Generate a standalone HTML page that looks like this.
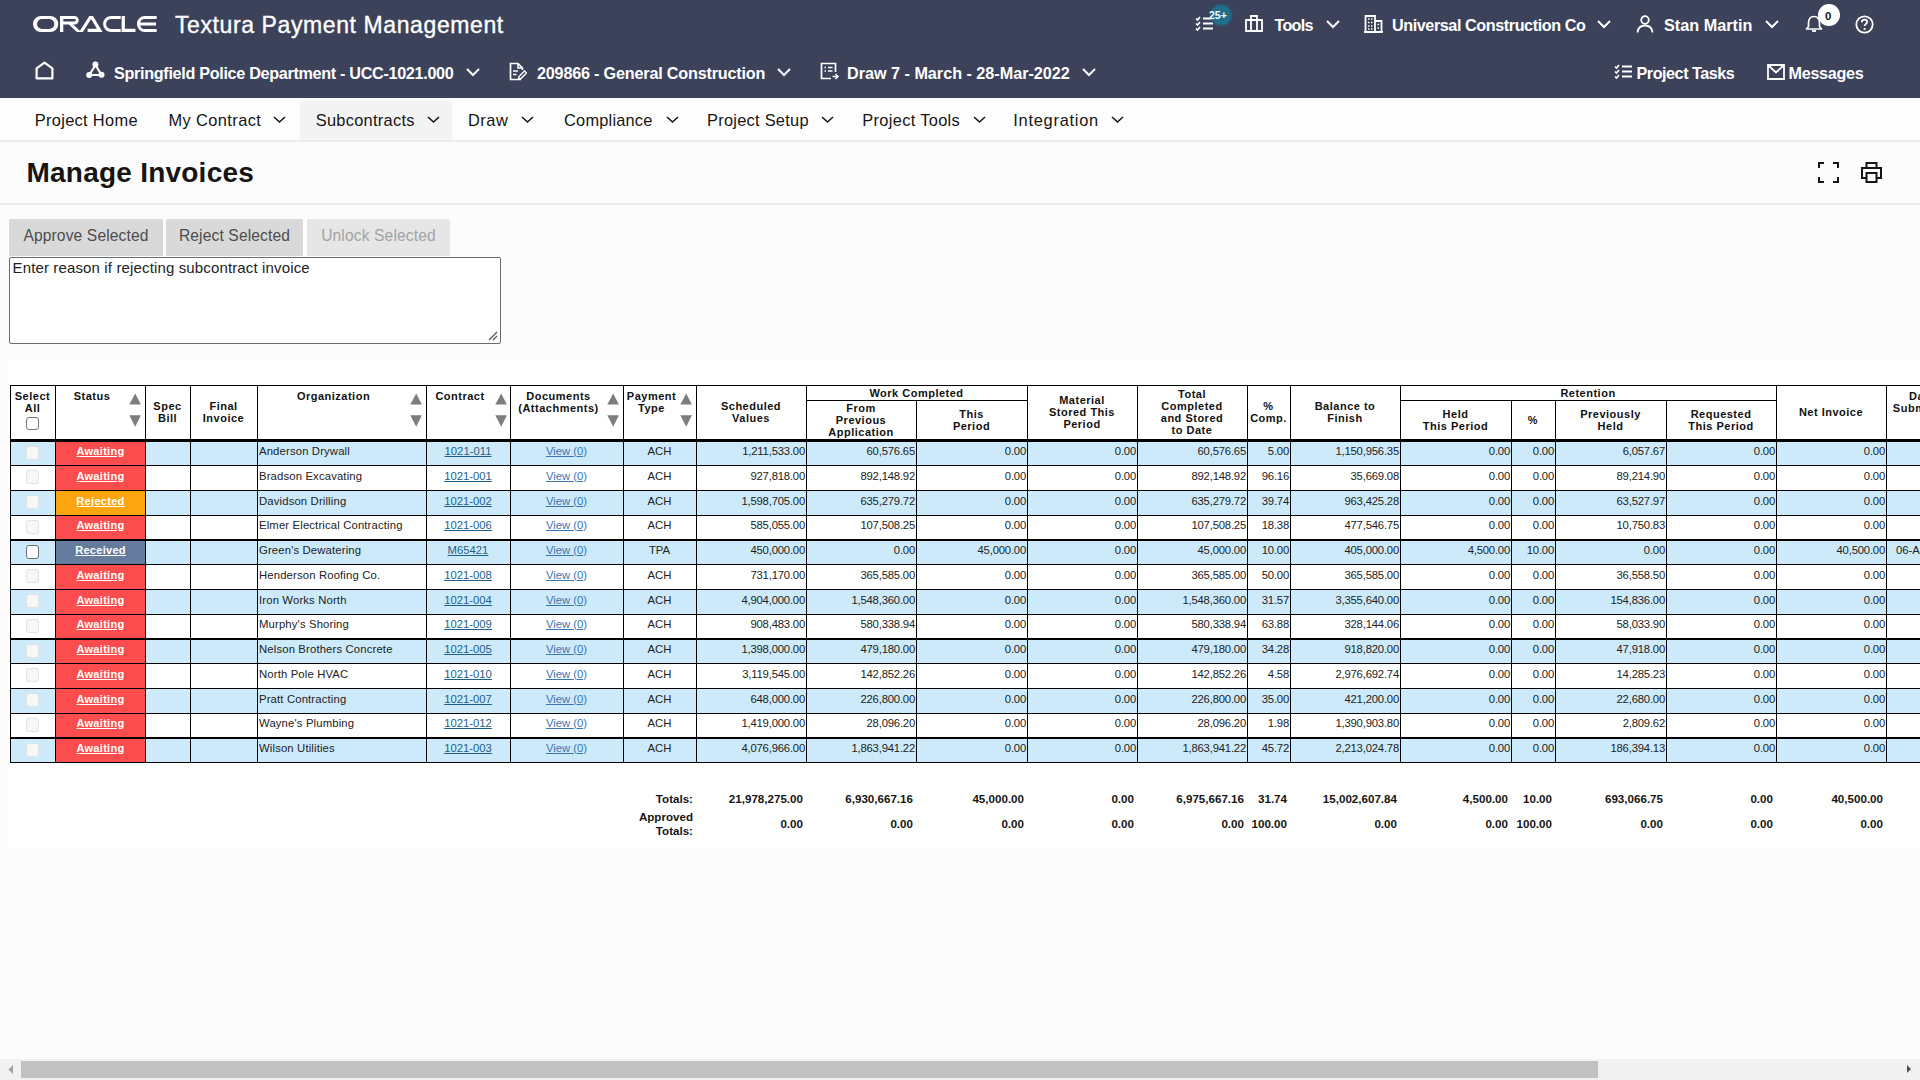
<!DOCTYPE html><html><head><meta charset="utf-8"><title>Manage Invoices</title><style>
*{box-sizing:border-box}
html,body{margin:0;padding:0}
body{width:1920px;height:1080px;overflow:hidden;position:relative;background:#fcfcfc;font-family:"Liberation Sans", sans-serif;}
.a{position:absolute;white-space:nowrap}
.hd{color:#fff;font-weight:bold;font-size:16px}
.mn{color:#161513;font-size:16.4px}
.th{font-weight:bold;font-size:11px;color:#111;text-align:center;line-height:12px;letter-spacing:0.5px}
.td{font-size:11.3px;color:#222;line-height:24px;white-space:nowrap;overflow:hidden}
.num{text-align:right;letter-spacing:-0.2px;padding-right:1px}
.lk{color:#1d5f8a;text-decoration:underline}
.st{color:#fff;font-weight:bold;text-decoration:underline;text-align:center;font-size:11px;letter-spacing:0.3px}
.tot{font-weight:bold;font-size:11.6px;color:#161513;text-align:right;letter-spacing:0px}
</style></head><body>
<div style="position:absolute;left:0px;top:0px;width:1920px;height:98px;background:#3d425b"></div>
<svg class="a" style="left:33px;top:16px" width="124" height="16" viewBox="0 0 124 16"><path fill="#fff" fill-rule="evenodd" d="M8,0 H17.3 A8,8 0 0 1 17.3,16 H8 A8,8 0 0 1 8,0 Z M9,3 H16.3 A5,5 0 0 1 16.3,13 H9 A5,5 0 0 1 9,3 Z"/><path fill="#fff" fill-rule="evenodd" d="M27,0 H41.5 A4.25,4.25 0 0 1 41.5,8.5 H40.2 L48.2,16 H43.9 L35.9,8.5 H30.3 V16 H27 Z M30.3,3 H41.5 A1.25,1.25 0 0 1 41.5,5.5 H30.3 Z"/><path fill="#fff" d="M46.1,16 L56.3,0 H60 L49.9,16 Z M56.3,0 H60 L69.6,16 H65.8 Z M54.6,12.8 H66.4 V16 H54.6 Z"/><path fill="#fff" d="M78.1,0 H87.7 V3 H78.1 A5,5 0 0 0 78.1,13 H87.7 V16 H78.1 A8,8 0 0 1 78.1,0 Z"/><path fill="#fff" d="M88.6,0 H91.9 V12.8 H102.5 V16 H88.6 Z"/><path fill="#fff" d="M111.9,0 H123.6 V3 H111.9 A5,5 0 0 0 107.1,6.4 H123 V9.4 H107.1 A5,5 0 0 0 111.9,13 H123.6 V16 H111.9 A8,8 0 0 1 111.9,0 Z"/></svg>
<div class="a" style="left:175px;top:11.23px;font-size:23px;line-height:29px;color:#fff;letter-spacing:0.6px;-webkit-text-stroke:0.35px #fff">Textura Payment Management</div>
<svg class="a" style="left:1195px;top:16px" width="19" height="16" viewBox="0 0 19 16"><path d="M1 2.5 L2.5 4 L5 1 M1 7.5 L2.5 9 L5 6 M1 12.5 L2.5 14 L5 11" fill="none" stroke="#fff" stroke-width="1.6"/><path d="M8 2.5 H18 M8 7.5 H18 M8 12.5 H18" stroke="#fff" stroke-width="1.8"/></svg>
<div class="a" style="left:1211px;top:4.5px;width:20px;height:20px;border-radius:50%;background:#1f6f8c;box-shadow:0 0 2px 1px rgba(31,111,140,0.6)"></div>
<div class="a" style="left:1209px;top:8.56px;font-size:10.5px;line-height:13px;color:#e8fbff;font-weight:bold;letter-spacing:0px">25+</div>
<svg class="a" style="left:1245px;top:15px" width="18" height="17" viewBox="0 0 18 17"><path d="M1 5 H17 V16 H1 Z M6 5 V1 H12 V5 M6 5 V16 M12 5 V16" fill="none" stroke="#fff" stroke-width="1.8"/></svg>
<div class="a" style="left:1274.5px;top:15.09px;font-size:16.2px;line-height:20px;color:#fff;font-weight:bold;letter-spacing:-0.75px">Tools</div>
<svg class="a" style="left:1326px;top:19.5px" width="14" height="9"><path d="M1 1 L7.0 7 L13 1" fill="none" stroke="#fff" stroke-width="2"/></svg>
<svg class="a" style="left:1364px;top:15px" width="19" height="18" viewBox="0 0 19 18"><path d="M1.5 17 V1 H11 V17 M11 6 H17.5 V17 M0 17 H19" fill="none" stroke="#fff" stroke-width="1.8"/><path d="M4 4 H5.5 M7 4 H8.5 M4 7.5 H5.5 M7 7.5 H8.5 M4 11 H5.5 M7 11 H8.5 M4 14 H5.5 M7 14 H8.5 M13.5 9.5 H15 M13.5 13 H15" stroke="#fff" stroke-width="1.6"/></svg>
<div class="a" style="left:1392px;top:15.09px;font-size:16.2px;line-height:20px;color:#fff;font-weight:bold;letter-spacing:-0.43px">Universal Construction Co</div>
<svg class="a" style="left:1597px;top:19.5px" width="14" height="9"><path d="M1 1 L7.0 7 L13 1" fill="none" stroke="#fff" stroke-width="2"/></svg>
<svg class="a" style="left:1636px;top:15px" width="18" height="18" viewBox="0 0 18 18"><circle cx="9" cy="5" r="3.8" fill="none" stroke="#fff" stroke-width="1.8"/><path d="M1.5 17.5 C2 12.5 5 10.5 9 10.5 C13 10.5 16 12.5 16.5 17.5" fill="none" stroke="#fff" stroke-width="1.8"/></svg>
<div class="a" style="left:1664px;top:15.09px;font-size:16.2px;line-height:20px;color:#fff;font-weight:bold;letter-spacing:0.03px">Stan Martin</div>
<svg class="a" style="left:1765px;top:19.5px" width="14" height="9"><path d="M1 1 L7.0 7 L13 1" fill="none" stroke="#fff" stroke-width="2"/></svg>
<svg class="a" style="left:1805px;top:15px" width="18" height="18" viewBox="0 0 18 18"><path d="M9 1.5 C5 1.5 3.5 4.5 3.5 8 V11.5 L1.5 14 H16.5 L14.5 11.5 V8 C14.5 4.5 13 1.5 9 1.5 Z" fill="none" stroke="#fff" stroke-width="1.7" stroke-linejoin="round"/><path d="M7 16 H11" stroke="#fff" stroke-width="1.8"/></svg>
<div class="a" style="left:1818px;top:4px;width:22px;height:22px;border-radius:50%;background:#fff"></div>
<div class="a" style="left:1825px;top:8.52px;font-size:11.5px;line-height:14px;color:#161513;font-weight:bold">0</div>
<svg class="a" style="left:1855px;top:15px" width="19" height="19" viewBox="0 0 19 19"><circle cx="9.5" cy="9.5" r="8.2" fill="none" stroke="#fff" stroke-width="1.8"/><path d="M6.8 7.2 C6.8 5.5 8 4.6 9.5 4.6 C11 4.6 12.2 5.6 12.2 7 C12.2 8.8 9.6 9 9.6 11" fill="none" stroke="#fff" stroke-width="1.8"/><circle cx="9.6" cy="14" r="1.1" fill="#fff"/></svg>
<svg class="a" style="left:35px;top:61px" width="19" height="19" viewBox="0 0 19 19"><path d="M1.6 17.4 V7.3 L9.5 1.6 L17.4 7.3 V17.4 Z" fill="none" stroke="#fff" stroke-width="2.2" stroke-linejoin="round"/></svg>
<svg class="a" style="left:86px;top:61px" width="19" height="19" viewBox="0 0 19 19"><path d="M9.5 4 L3.3 14 H15.5 Z" fill="none" stroke="#fff" stroke-width="2"/><circle cx="9.4" cy="3.5" r="3" fill="#fff"/><circle cx="3.2" cy="14" r="3" fill="#fff"/><circle cx="15.5" cy="13.8" r="3" fill="#fff"/></svg>
<div class="a" style="left:114px;top:63.09px;font-size:16.2px;line-height:20px;color:#fff;font-weight:bold;letter-spacing:-0.32px">Springfield Police Department - UCC-1021.000</div>
<svg class="a" style="left:466px;top:67.5px" width="14" height="9"><path d="M1 1 L7.0 7 L13 1" fill="none" stroke="#fff" stroke-width="2"/></svg>
<svg class="a" style="left:509px;top:62px" width="18" height="19" viewBox="0 0 18 19"><path d="M12 17.5 H1.5 V1.5 H9 L13.5 6 V8" fill="none" stroke="#fff" stroke-width="1.7"/><path d="M9 1.5 V6 H13.5" fill="none" stroke="#fff" stroke-width="1.5"/><path d="M4 9 H9 M4 12.5 H7.5" stroke="#fff" stroke-width="1.5"/><path d="M9.5 17 L10 14.5 L15.5 9 L17.5 11 L12 16.5 Z" fill="none" stroke="#fff" stroke-width="1.4"/></svg>
<div class="a" style="left:537px;top:63.09px;font-size:16.2px;line-height:20px;color:#fff;font-weight:bold;letter-spacing:-0.2px">209866 - General Construction</div>
<svg class="a" style="left:777px;top:67.5px" width="14" height="9"><path d="M1 1 L7.0 7 L13 1" fill="none" stroke="#fff" stroke-width="2"/></svg>
<svg class="a" style="left:820px;top:62px" width="19" height="18" viewBox="0 0 19 18"><path d="M11 16.5 H1.5 V1.5 H15.5 V10" fill="none" stroke="#fff" stroke-width="1.7"/><path d="M4.5 5.5 H6 M8 5.5 H12.5 M4.5 9 H6 M8 9 H12.5" stroke="#fff" stroke-width="1.5"/><path d="M12.5 14.5 H18 M15.5 12 L18 14.5 L15.5 17" fill="none" stroke="#fff" stroke-width="1.5"/></svg>
<div class="a" style="left:847px;top:63.09px;font-size:16.2px;line-height:20px;color:#fff;font-weight:bold;letter-spacing:-0.01px">Draw 7 - March - 28-Mar-2022</div>
<svg class="a" style="left:1082px;top:67.5px" width="14" height="9"><path d="M1 1 L7.0 7 L13 1" fill="none" stroke="#fff" stroke-width="2"/></svg>
<svg class="a" style="left:1614px;top:64px" width="19" height="16" viewBox="0 0 19 16"><path d="M1 2.5 L2.5 4 L5 1 M1 7.5 L2.5 9 L5 6 M1 12.5 L2.5 14 L5 11" fill="none" stroke="#fff" stroke-width="1.6"/><path d="M8 2.5 H18 M8 7.5 H18 M8 12.5 H18" stroke="#fff" stroke-width="1.8"/></svg>
<div class="a" style="left:1636.5px;top:62.79px;font-size:16.2px;line-height:20px;color:#fff;font-weight:bold;letter-spacing:-0.475px">Project Tasks</div>
<svg class="a" style="left:1767px;top:64px" width="18" height="16" viewBox="0 0 18 16"><path d="M1 1 H17 V15 H1 Z M1.5 1.5 L9 8.5 L16.5 1.5" fill="none" stroke="#fff" stroke-width="1.8"/></svg>
<div class="a" style="left:1788.5px;top:62.79px;font-size:16.2px;line-height:20px;color:#fff;font-weight:bold;letter-spacing:-0.3px">Messages</div>
<div style="position:absolute;left:0px;top:98px;width:1920px;height:42px;background:#fdfdfe"></div>
<div style="position:absolute;left:300px;top:101px;width:152px;height:39px;background:#f3f3f4"></div>
<div style="position:absolute;left:0px;top:140px;width:1920px;height:2px;background:#ededed"></div>
<div class="a" style="left:34.8px;top:110.12px;font-size:16.4px;line-height:20px;color:#161513;letter-spacing:0.31px">Project Home</div>
<div class="a" style="left:168.4px;top:110.12px;font-size:16.4px;line-height:20px;color:#161513;letter-spacing:0.41px">My Contract</div>
<svg class="a" style="left:273px;top:116px" width="13" height="8"><path d="M1 1 L6.5 6 L12 1" fill="none" stroke="#161513" stroke-width="1.6"/></svg>
<div class="a" style="left:315.7px;top:110.12px;font-size:16.4px;line-height:20px;color:#161513;letter-spacing:0.28px">Subcontracts</div>
<svg class="a" style="left:426.5px;top:116px" width="13" height="8"><path d="M1 1 L6.5 6 L12 1" fill="none" stroke="#161513" stroke-width="1.6"/></svg>
<div class="a" style="left:468px;top:110.12px;font-size:16.4px;line-height:20px;color:#161513;letter-spacing:0.5px">Draw</div>
<svg class="a" style="left:520.5px;top:116px" width="13" height="8"><path d="M1 1 L6.5 6 L12 1" fill="none" stroke="#161513" stroke-width="1.6"/></svg>
<div class="a" style="left:564.1px;top:110.12px;font-size:16.4px;line-height:20px;color:#161513;letter-spacing:0.19px">Compliance</div>
<svg class="a" style="left:665.5px;top:116px" width="13" height="8"><path d="M1 1 L6.5 6 L12 1" fill="none" stroke="#161513" stroke-width="1.6"/></svg>
<div class="a" style="left:707.1px;top:110.12px;font-size:16.4px;line-height:20px;color:#161513;letter-spacing:0.25px">Project Setup</div>
<svg class="a" style="left:821.2px;top:116px" width="13" height="8"><path d="M1 1 L6.5 6 L12 1" fill="none" stroke="#161513" stroke-width="1.6"/></svg>
<div class="a" style="left:862.2px;top:110.12px;font-size:16.4px;line-height:20px;color:#161513;letter-spacing:0.34px">Project Tools</div>
<svg class="a" style="left:972.8px;top:116px" width="13" height="8"><path d="M1 1 L6.5 6 L12 1" fill="none" stroke="#161513" stroke-width="1.6"/></svg>
<div class="a" style="left:1013.3px;top:110.12px;font-size:16.4px;line-height:20px;color:#161513;letter-spacing:0.74px">Integration</div>
<svg class="a" style="left:1111.2px;top:116px" width="13" height="8"><path d="M1 1 L6.5 6 L12 1" fill="none" stroke="#161513" stroke-width="1.6"/></svg>
<div style="position:absolute;left:0px;top:142px;width:1920px;height:61px;background:#fcfcfc"></div>
<div style="position:absolute;left:0px;top:203px;width:1920px;height:2px;background:#ededed"></div>
<div class="a" style="left:26.5px;top:154px;font-size:28px;font-weight:bold;color:#161513;line-height:38px;letter-spacing:0.23px">Manage Invoices</div>
<svg class="a" style="left:1818px;top:162px" width="21" height="21" viewBox="0 0 21 21"><path d="M1 6 V1 H6 M15 1 H20 V6 M20 15 V20 H15 M6 20 H1 V15" fill="none" stroke="#161513" stroke-width="2"/></svg>
<svg class="a" style="left:1861px;top:162px" width="21" height="21" viewBox="0 0 21 21"><path d="M5.5 6 V1 H15.5 V6 M5.5 16 H1 V6 H20 V16 H15.5 M5.5 11 H15.5 V20 H5.5 Z" fill="none" stroke="#161513" stroke-width="2"/></svg>
<div class="a" style="left:9px;top:219px;width:154px;height:37px;background:#d9d9d9;border-radius:2px 2px 0 0;color:#4d4d4d;font-size:15.6px;line-height:34px;text-align:center;letter-spacing:0.13px">Approve Selected</div>
<div class="a" style="left:166px;top:219px;width:137px;height:37px;background:#d9d9d9;border-radius:2px 2px 0 0;color:#4d4d4d;font-size:15.6px;line-height:34px;text-align:center;letter-spacing:0.13px">Reject Selected</div>
<div class="a" style="left:307px;top:219px;width:143px;height:37px;background:#e6e6e6;border-radius:2px 2px 0 0;color:#a3a3a3;font-size:15.6px;line-height:34px;text-align:center;letter-spacing:0.13px">Unlock Selected</div>
<div style="position:absolute;left:9px;top:257px;width:492px;height:87px;background:#fff;border:1px solid #6b6b6b;border-radius:2px"></div>
<div class="a" style="left:12.5px;top:259px;font-size:15px;color:#222;line-height:18px;letter-spacing:0.14px">Enter reason if rejecting subcontract invoice</div>
<svg class="a" style="left:486px;top:329px" width="12" height="12"><path d="M3 11 L11 3 M7 11 L11 7" stroke="#555" stroke-width="1.2"/></svg>
<div style="position:absolute;left:8px;top:360px;width:1912px;height:488px;background:#fff"></div>
<div style="position:absolute;left:10px;top:385px;width:1910px;height:54px;background:#fff"></div>
<div style="position:absolute;left:10px;top:442px;width:1910px;height:23px;background:#cdeafb"></div>
<div style="position:absolute;left:10px;top:466px;width:1910px;height:24px;background:#fff"></div>
<div style="position:absolute;left:10px;top:491px;width:1910px;height:24px;background:#cdeafb"></div>
<div style="position:absolute;left:10px;top:516px;width:1910px;height:23px;background:#fff"></div>
<div style="position:absolute;left:10px;top:541px;width:1910px;height:23px;background:#cdeafb"></div>
<div style="position:absolute;left:10px;top:565px;width:1910px;height:24px;background:#fff"></div>
<div style="position:absolute;left:10px;top:590px;width:1910px;height:24px;background:#cdeafb"></div>
<div style="position:absolute;left:10px;top:615px;width:1910px;height:23px;background:#fff"></div>
<div style="position:absolute;left:10px;top:640px;width:1910px;height:23px;background:#cdeafb"></div>
<div style="position:absolute;left:10px;top:664px;width:1910px;height:24px;background:#fff"></div>
<div style="position:absolute;left:10px;top:689px;width:1910px;height:24px;background:#cdeafb"></div>
<div style="position:absolute;left:10px;top:714px;width:1910px;height:23px;background:#fff"></div>
<div style="position:absolute;left:10px;top:739px;width:1910px;height:23px;background:#cdeafb"></div>
<div style="position:absolute;left:56px;top:442px;width:89px;height:23px;background:#fb4d4d"></div>
<div style="position:absolute;left:56px;top:466px;width:89px;height:24px;background:#fb4d4d"></div>
<div style="position:absolute;left:56px;top:491px;width:89px;height:24px;background:#fda50f"></div>
<div style="position:absolute;left:56px;top:516px;width:89px;height:23px;background:#fb4d4d"></div>
<div style="position:absolute;left:56px;top:541px;width:89px;height:23px;background:#657c9e"></div>
<div style="position:absolute;left:56px;top:565px;width:89px;height:24px;background:#fb4d4d"></div>
<div style="position:absolute;left:56px;top:590px;width:89px;height:24px;background:#fb4d4d"></div>
<div style="position:absolute;left:56px;top:615px;width:89px;height:23px;background:#fb4d4d"></div>
<div style="position:absolute;left:56px;top:640px;width:89px;height:23px;background:#fb4d4d"></div>
<div style="position:absolute;left:56px;top:664px;width:89px;height:24px;background:#fb4d4d"></div>
<div style="position:absolute;left:56px;top:689px;width:89px;height:24px;background:#fb4d4d"></div>
<div style="position:absolute;left:56px;top:714px;width:89px;height:23px;background:#fb4d4d"></div>
<div style="position:absolute;left:56px;top:739px;width:89px;height:23px;background:#fb4d4d"></div>
<div style="position:absolute;left:10px;top:385px;width:1910px;height:1px;background:#000"></div>
<div style="position:absolute;left:806px;top:400px;width:221px;height:1px;background:#000"></div>
<div style="position:absolute;left:1400px;top:400px;width:376px;height:1px;background:#000"></div>
<div style="position:absolute;left:10px;top:439px;width:1910px;height:3px;background:#000"></div>
<div style="position:absolute;left:10px;top:465px;width:1910px;height:1px;background:#000"></div>
<div style="position:absolute;left:10px;top:490px;width:1910px;height:1px;background:#000"></div>
<div style="position:absolute;left:10px;top:515px;width:1910px;height:1px;background:#000"></div>
<div style="position:absolute;left:10px;top:539px;width:1910px;height:2px;background:#000"></div>
<div style="position:absolute;left:10px;top:564px;width:1910px;height:1px;background:#000"></div>
<div style="position:absolute;left:10px;top:589px;width:1910px;height:1px;background:#000"></div>
<div style="position:absolute;left:10px;top:614px;width:1910px;height:1px;background:#000"></div>
<div style="position:absolute;left:10px;top:638px;width:1910px;height:2px;background:#000"></div>
<div style="position:absolute;left:10px;top:663px;width:1910px;height:1px;background:#000"></div>
<div style="position:absolute;left:10px;top:688px;width:1910px;height:1px;background:#000"></div>
<div style="position:absolute;left:10px;top:713px;width:1910px;height:1px;background:#000"></div>
<div style="position:absolute;left:10px;top:737px;width:1910px;height:2px;background:#000"></div>
<div style="position:absolute;left:10px;top:762px;width:1910px;height:1px;background:#000"></div>
<div style="position:absolute;left:10px;top:385px;width:1px;height:377px;background:#000"></div>
<div style="position:absolute;left:55px;top:385px;width:1px;height:377px;background:#000"></div>
<div style="position:absolute;left:145px;top:385px;width:1px;height:377px;background:#000"></div>
<div style="position:absolute;left:190px;top:385px;width:1px;height:377px;background:#000"></div>
<div style="position:absolute;left:257px;top:385px;width:1px;height:377px;background:#000"></div>
<div style="position:absolute;left:426px;top:385px;width:1px;height:377px;background:#000"></div>
<div style="position:absolute;left:510px;top:385px;width:1px;height:377px;background:#000"></div>
<div style="position:absolute;left:623px;top:385px;width:1px;height:377px;background:#000"></div>
<div style="position:absolute;left:696px;top:385px;width:1px;height:377px;background:#000"></div>
<div style="position:absolute;left:806px;top:385px;width:1px;height:377px;background:#000"></div>
<div style="position:absolute;left:916px;top:400px;width:1px;height:362px;background:#000"></div>
<div style="position:absolute;left:1027px;top:385px;width:1px;height:377px;background:#000"></div>
<div style="position:absolute;left:1137px;top:385px;width:1px;height:377px;background:#000"></div>
<div style="position:absolute;left:1247px;top:385px;width:1px;height:377px;background:#000"></div>
<div style="position:absolute;left:1290px;top:385px;width:1px;height:377px;background:#000"></div>
<div style="position:absolute;left:1400px;top:385px;width:1px;height:377px;background:#000"></div>
<div style="position:absolute;left:1511px;top:400px;width:1px;height:362px;background:#000"></div>
<div style="position:absolute;left:1555px;top:400px;width:1px;height:362px;background:#000"></div>
<div style="position:absolute;left:1666px;top:400px;width:1px;height:362px;background:#000"></div>
<div style="position:absolute;left:1776px;top:385px;width:1px;height:377px;background:#000"></div>
<div style="position:absolute;left:1886px;top:385px;width:1px;height:377px;background:#000"></div>
<div class="a th" style="left:10px;top:390px;width:45px;">Select<br>All</div>
<div class="a th" style="left:55px;top:390px;width:74px;">Status</div>
<div class="a th" style="left:145px;top:400px;width:45px;">Spec<br>Bill</div>
<div class="a th" style="left:190px;top:400px;width:67px;">Final<br>Invoice</div>
<div class="a th" style="left:257px;top:390px;width:153px;">Organization</div>
<div class="a th" style="left:426px;top:390px;width:68px;">Contract</div>
<div class="a th" style="left:510px;top:390px;width:97px;">Documents<br>(Attachments)</div>
<div class="a th" style="left:623px;top:390px;width:57px;">Payment<br>Type</div>
<div class="a th" style="left:696px;top:400px;width:110px;">Scheduled<br>Values</div>
<div class="a th" style="left:806px;top:387px;width:221px;">Work Completed</div>
<div class="a th" style="left:806px;top:402px;width:110px;">From<br>Previous<br>Application</div>
<div class="a th" style="left:916px;top:408px;width:111px;">This<br>Period</div>
<div class="a th" style="left:1027px;top:394px;width:110px;">Material<br>Stored This<br>Period</div>
<div class="a th" style="left:1137px;top:388px;width:110px;">Total<br>Completed<br>and Stored<br>to Date</div>
<div class="a th" style="left:1247px;top:400px;width:43px;">%<br>Comp.</div>
<div class="a th" style="left:1290px;top:400px;width:110px;">Balance to<br>Finish</div>
<div class="a th" style="left:1400px;top:387px;width:376px;">Retention</div>
<div class="a th" style="left:1400px;top:408px;width:111px;">Held<br>This Period</div>
<div class="a th" style="left:1511px;top:414px;width:44px;">%</div>
<div class="a th" style="left:1555px;top:408px;width:111px;">Previously<br>Held</div>
<div class="a th" style="left:1666px;top:408px;width:110px;">Requested<br>This Period</div>
<div class="a th" style="left:1776px;top:406px;width:110px;">Net Invoice</div>
<div class="a th" style="left:1886px;top:390px;width:72px;">Date<br>Submitted</div>
<svg class="a" style="left:129px;top:392px" width="12" height="36"><path d="M6.2 1.4 L11.9 12.5 L0.3 12.5 Z" fill="#7d7d7d"/><path d="M0.3 23.2 L11.9 23.2 L6.2 34.7 Z" fill="#7d7d7d"/></svg>
<svg class="a" style="left:410px;top:392px" width="12" height="36"><path d="M6.2 1.4 L11.9 12.5 L0.3 12.5 Z" fill="#7d7d7d"/><path d="M0.3 23.2 L11.9 23.2 L6.2 34.7 Z" fill="#7d7d7d"/></svg>
<svg class="a" style="left:495px;top:392px" width="12" height="36"><path d="M6.2 1.4 L11.9 12.5 L0.3 12.5 Z" fill="#7d7d7d"/><path d="M0.3 23.2 L11.9 23.2 L6.2 34.7 Z" fill="#7d7d7d"/></svg>
<svg class="a" style="left:607px;top:392px" width="12" height="36"><path d="M6.2 1.4 L11.9 12.5 L0.3 12.5 Z" fill="#7d7d7d"/><path d="M0.3 23.2 L11.9 23.2 L6.2 34.7 Z" fill="#7d7d7d"/></svg>
<svg class="a" style="left:680px;top:392px" width="12" height="36"><path d="M6.2 1.4 L11.9 12.5 L0.3 12.5 Z" fill="#7d7d7d"/><path d="M0.3 23.2 L11.9 23.2 L6.2 34.7 Z" fill="#7d7d7d"/></svg>
<div class="a" style="left:26px;top:417px;width:13px;height:13px;border:1px solid #777;border-radius:3px;background:#fff"></div>
<div class="a" style="left:26px;top:446px;width:13px;height:14px;border:1px solid #e2e2e2;border-radius:3px;background:#f7f7f7"></div>
<div class="a td st" style="left:56px;top:439.5px;width:89px;height:23px;line-height:23px">Awaiting</div>
<div class="a td" style="left:259px;top:439.5px;width:167px;height:23px;line-height:23px;letter-spacing:0.15px">Anderson Drywall</div>
<div class="a td lk" style="left:426px;top:439.5px;width:84px;height:23px;line-height:23px;text-align:center">1021-011</div>
<div class="a td lk" style="left:510px;top:439.5px;width:113px;height:23px;line-height:23px;text-align:center;color:#3a76b0">View (0)</div>
<div class="a td" style="left:623px;top:439.5px;width:73px;height:23px;line-height:23px;text-align:center">ACH</div>
<div class="a td num" style="left:696px;top:439.5px;width:110px;height:23px;line-height:23px">1,211,533.00</div>
<div class="a td num" style="left:806px;top:439.5px;width:110px;height:23px;line-height:23px">60,576.65</div>
<div class="a td num" style="left:916px;top:439.5px;width:111px;height:23px;line-height:23px">0.00</div>
<div class="a td num" style="left:1027px;top:439.5px;width:110px;height:23px;line-height:23px">0.00</div>
<div class="a td num" style="left:1137px;top:439.5px;width:110px;height:23px;line-height:23px">60,576.65</div>
<div class="a td num" style="left:1247px;top:439.5px;width:43px;height:23px;line-height:23px">5.00</div>
<div class="a td num" style="left:1290px;top:439.5px;width:110px;height:23px;line-height:23px">1,150,956.35</div>
<div class="a td num" style="left:1400px;top:439.5px;width:111px;height:23px;line-height:23px">0.00</div>
<div class="a td num" style="left:1511px;top:439.5px;width:44px;height:23px;line-height:23px">0.00</div>
<div class="a td num" style="left:1555px;top:439.5px;width:111px;height:23px;line-height:23px">6,057.67</div>
<div class="a td num" style="left:1666px;top:439.5px;width:110px;height:23px;line-height:23px">0.00</div>
<div class="a td num" style="left:1776px;top:439.5px;width:110px;height:23px;line-height:23px">0.00</div>
<div class="a" style="left:26px;top:470px;width:13px;height:14px;border:1px solid #e2e2e2;border-radius:3px;background:#f7f7f7"></div>
<div class="a td st" style="left:56px;top:463.5px;width:89px;height:24px;line-height:24px">Awaiting</div>
<div class="a td" style="left:259px;top:463.5px;width:167px;height:24px;line-height:24px;letter-spacing:0.15px">Bradson Excavating</div>
<div class="a td lk" style="left:426px;top:463.5px;width:84px;height:24px;line-height:24px;text-align:center">1021-001</div>
<div class="a td lk" style="left:510px;top:463.5px;width:113px;height:24px;line-height:24px;text-align:center;color:#3a76b0">View (0)</div>
<div class="a td" style="left:623px;top:463.5px;width:73px;height:24px;line-height:24px;text-align:center">ACH</div>
<div class="a td num" style="left:696px;top:463.5px;width:110px;height:24px;line-height:24px">927,818.00</div>
<div class="a td num" style="left:806px;top:463.5px;width:110px;height:24px;line-height:24px">892,148.92</div>
<div class="a td num" style="left:916px;top:463.5px;width:111px;height:24px;line-height:24px">0.00</div>
<div class="a td num" style="left:1027px;top:463.5px;width:110px;height:24px;line-height:24px">0.00</div>
<div class="a td num" style="left:1137px;top:463.5px;width:110px;height:24px;line-height:24px">892,148.92</div>
<div class="a td num" style="left:1247px;top:463.5px;width:43px;height:24px;line-height:24px">96.16</div>
<div class="a td num" style="left:1290px;top:463.5px;width:110px;height:24px;line-height:24px">35,669.08</div>
<div class="a td num" style="left:1400px;top:463.5px;width:111px;height:24px;line-height:24px">0.00</div>
<div class="a td num" style="left:1511px;top:463.5px;width:44px;height:24px;line-height:24px">0.00</div>
<div class="a td num" style="left:1555px;top:463.5px;width:111px;height:24px;line-height:24px">89,214.90</div>
<div class="a td num" style="left:1666px;top:463.5px;width:110px;height:24px;line-height:24px">0.00</div>
<div class="a td num" style="left:1776px;top:463.5px;width:110px;height:24px;line-height:24px">0.00</div>
<div class="a" style="left:26px;top:495px;width:13px;height:14px;border:1px solid #e2e2e2;border-radius:3px;background:#f7f7f7"></div>
<div class="a td st" style="left:56px;top:488.5px;width:89px;height:24px;line-height:24px">Rejected</div>
<div class="a td" style="left:259px;top:488.5px;width:167px;height:24px;line-height:24px;letter-spacing:0.15px">Davidson Drilling</div>
<div class="a td lk" style="left:426px;top:488.5px;width:84px;height:24px;line-height:24px;text-align:center">1021-002</div>
<div class="a td lk" style="left:510px;top:488.5px;width:113px;height:24px;line-height:24px;text-align:center;color:#3a76b0">View (0)</div>
<div class="a td" style="left:623px;top:488.5px;width:73px;height:24px;line-height:24px;text-align:center">ACH</div>
<div class="a td num" style="left:696px;top:488.5px;width:110px;height:24px;line-height:24px">1,598,705.00</div>
<div class="a td num" style="left:806px;top:488.5px;width:110px;height:24px;line-height:24px">635,279.72</div>
<div class="a td num" style="left:916px;top:488.5px;width:111px;height:24px;line-height:24px">0.00</div>
<div class="a td num" style="left:1027px;top:488.5px;width:110px;height:24px;line-height:24px">0.00</div>
<div class="a td num" style="left:1137px;top:488.5px;width:110px;height:24px;line-height:24px">635,279.72</div>
<div class="a td num" style="left:1247px;top:488.5px;width:43px;height:24px;line-height:24px">39.74</div>
<div class="a td num" style="left:1290px;top:488.5px;width:110px;height:24px;line-height:24px">963,425.28</div>
<div class="a td num" style="left:1400px;top:488.5px;width:111px;height:24px;line-height:24px">0.00</div>
<div class="a td num" style="left:1511px;top:488.5px;width:44px;height:24px;line-height:24px">0.00</div>
<div class="a td num" style="left:1555px;top:488.5px;width:111px;height:24px;line-height:24px">63,527.97</div>
<div class="a td num" style="left:1666px;top:488.5px;width:110px;height:24px;line-height:24px">0.00</div>
<div class="a td num" style="left:1776px;top:488.5px;width:110px;height:24px;line-height:24px">0.00</div>
<div class="a" style="left:26px;top:520px;width:13px;height:14px;border:1px solid #e2e2e2;border-radius:3px;background:#f7f7f7"></div>
<div class="a td st" style="left:56px;top:513.5px;width:89px;height:23px;line-height:23px">Awaiting</div>
<div class="a td" style="left:259px;top:513.5px;width:167px;height:23px;line-height:23px;letter-spacing:0.15px">Elmer Electrical Contracting</div>
<div class="a td lk" style="left:426px;top:513.5px;width:84px;height:23px;line-height:23px;text-align:center">1021-006</div>
<div class="a td lk" style="left:510px;top:513.5px;width:113px;height:23px;line-height:23px;text-align:center;color:#3a76b0">View (0)</div>
<div class="a td" style="left:623px;top:513.5px;width:73px;height:23px;line-height:23px;text-align:center">ACH</div>
<div class="a td num" style="left:696px;top:513.5px;width:110px;height:23px;line-height:23px">585,055.00</div>
<div class="a td num" style="left:806px;top:513.5px;width:110px;height:23px;line-height:23px">107,508.25</div>
<div class="a td num" style="left:916px;top:513.5px;width:111px;height:23px;line-height:23px">0.00</div>
<div class="a td num" style="left:1027px;top:513.5px;width:110px;height:23px;line-height:23px">0.00</div>
<div class="a td num" style="left:1137px;top:513.5px;width:110px;height:23px;line-height:23px">107,508.25</div>
<div class="a td num" style="left:1247px;top:513.5px;width:43px;height:23px;line-height:23px">18.38</div>
<div class="a td num" style="left:1290px;top:513.5px;width:110px;height:23px;line-height:23px">477,546.75</div>
<div class="a td num" style="left:1400px;top:513.5px;width:111px;height:23px;line-height:23px">0.00</div>
<div class="a td num" style="left:1511px;top:513.5px;width:44px;height:23px;line-height:23px">0.00</div>
<div class="a td num" style="left:1555px;top:513.5px;width:111px;height:23px;line-height:23px">10,750.83</div>
<div class="a td num" style="left:1666px;top:513.5px;width:110px;height:23px;line-height:23px">0.00</div>
<div class="a td num" style="left:1776px;top:513.5px;width:110px;height:23px;line-height:23px">0.00</div>
<div class="a" style="left:26px;top:545px;width:13px;height:14px;border:1px solid #6d6d6d;border-radius:3px;background:#fff"></div>
<div class="a td st" style="left:56px;top:538.5px;width:89px;height:23px;line-height:23px">Received</div>
<div class="a td" style="left:259px;top:538.5px;width:167px;height:23px;line-height:23px;letter-spacing:0.15px">Green&#x27;s Dewatering</div>
<div class="a td lk" style="left:426px;top:538.5px;width:84px;height:23px;line-height:23px;text-align:center">M65421</div>
<div class="a td lk" style="left:510px;top:538.5px;width:113px;height:23px;line-height:23px;text-align:center;color:#3a76b0">View (0)</div>
<div class="a td" style="left:623px;top:538.5px;width:73px;height:23px;line-height:23px;text-align:center">TPA</div>
<div class="a td num" style="left:696px;top:538.5px;width:110px;height:23px;line-height:23px">450,000.00</div>
<div class="a td num" style="left:806px;top:538.5px;width:110px;height:23px;line-height:23px">0.00</div>
<div class="a td num" style="left:916px;top:538.5px;width:111px;height:23px;line-height:23px">45,000.00</div>
<div class="a td num" style="left:1027px;top:538.5px;width:110px;height:23px;line-height:23px">0.00</div>
<div class="a td num" style="left:1137px;top:538.5px;width:110px;height:23px;line-height:23px">45,000.00</div>
<div class="a td num" style="left:1247px;top:538.5px;width:43px;height:23px;line-height:23px">10.00</div>
<div class="a td num" style="left:1290px;top:538.5px;width:110px;height:23px;line-height:23px">405,000.00</div>
<div class="a td num" style="left:1400px;top:538.5px;width:111px;height:23px;line-height:23px">4,500.00</div>
<div class="a td num" style="left:1511px;top:538.5px;width:44px;height:23px;line-height:23px">10.00</div>
<div class="a td num" style="left:1555px;top:538.5px;width:111px;height:23px;line-height:23px">0.00</div>
<div class="a td num" style="left:1666px;top:538.5px;width:110px;height:23px;line-height:23px">0.00</div>
<div class="a td num" style="left:1776px;top:538.5px;width:110px;height:23px;line-height:23px">40,500.00</div>
<div class="a td" style="left:1896px;top:538.5px;width:60px;height:23px;line-height:23px">06-Apr-2022</div>
<div class="a" style="left:26px;top:569px;width:13px;height:14px;border:1px solid #e2e2e2;border-radius:3px;background:#f7f7f7"></div>
<div class="a td st" style="left:56px;top:562.5px;width:89px;height:24px;line-height:24px">Awaiting</div>
<div class="a td" style="left:259px;top:562.5px;width:167px;height:24px;line-height:24px;letter-spacing:0.15px">Henderson Roofing Co.</div>
<div class="a td lk" style="left:426px;top:562.5px;width:84px;height:24px;line-height:24px;text-align:center">1021-008</div>
<div class="a td lk" style="left:510px;top:562.5px;width:113px;height:24px;line-height:24px;text-align:center;color:#3a76b0">View (0)</div>
<div class="a td" style="left:623px;top:562.5px;width:73px;height:24px;line-height:24px;text-align:center">ACH</div>
<div class="a td num" style="left:696px;top:562.5px;width:110px;height:24px;line-height:24px">731,170.00</div>
<div class="a td num" style="left:806px;top:562.5px;width:110px;height:24px;line-height:24px">365,585.00</div>
<div class="a td num" style="left:916px;top:562.5px;width:111px;height:24px;line-height:24px">0.00</div>
<div class="a td num" style="left:1027px;top:562.5px;width:110px;height:24px;line-height:24px">0.00</div>
<div class="a td num" style="left:1137px;top:562.5px;width:110px;height:24px;line-height:24px">365,585.00</div>
<div class="a td num" style="left:1247px;top:562.5px;width:43px;height:24px;line-height:24px">50.00</div>
<div class="a td num" style="left:1290px;top:562.5px;width:110px;height:24px;line-height:24px">365,585.00</div>
<div class="a td num" style="left:1400px;top:562.5px;width:111px;height:24px;line-height:24px">0.00</div>
<div class="a td num" style="left:1511px;top:562.5px;width:44px;height:24px;line-height:24px">0.00</div>
<div class="a td num" style="left:1555px;top:562.5px;width:111px;height:24px;line-height:24px">36,558.50</div>
<div class="a td num" style="left:1666px;top:562.5px;width:110px;height:24px;line-height:24px">0.00</div>
<div class="a td num" style="left:1776px;top:562.5px;width:110px;height:24px;line-height:24px">0.00</div>
<div class="a" style="left:26px;top:594px;width:13px;height:14px;border:1px solid #e2e2e2;border-radius:3px;background:#f7f7f7"></div>
<div class="a td st" style="left:56px;top:587.5px;width:89px;height:24px;line-height:24px">Awaiting</div>
<div class="a td" style="left:259px;top:587.5px;width:167px;height:24px;line-height:24px;letter-spacing:0.15px">Iron Works North</div>
<div class="a td lk" style="left:426px;top:587.5px;width:84px;height:24px;line-height:24px;text-align:center">1021-004</div>
<div class="a td lk" style="left:510px;top:587.5px;width:113px;height:24px;line-height:24px;text-align:center;color:#3a76b0">View (0)</div>
<div class="a td" style="left:623px;top:587.5px;width:73px;height:24px;line-height:24px;text-align:center">ACH</div>
<div class="a td num" style="left:696px;top:587.5px;width:110px;height:24px;line-height:24px">4,904,000.00</div>
<div class="a td num" style="left:806px;top:587.5px;width:110px;height:24px;line-height:24px">1,548,360.00</div>
<div class="a td num" style="left:916px;top:587.5px;width:111px;height:24px;line-height:24px">0.00</div>
<div class="a td num" style="left:1027px;top:587.5px;width:110px;height:24px;line-height:24px">0.00</div>
<div class="a td num" style="left:1137px;top:587.5px;width:110px;height:24px;line-height:24px">1,548,360.00</div>
<div class="a td num" style="left:1247px;top:587.5px;width:43px;height:24px;line-height:24px">31.57</div>
<div class="a td num" style="left:1290px;top:587.5px;width:110px;height:24px;line-height:24px">3,355,640.00</div>
<div class="a td num" style="left:1400px;top:587.5px;width:111px;height:24px;line-height:24px">0.00</div>
<div class="a td num" style="left:1511px;top:587.5px;width:44px;height:24px;line-height:24px">0.00</div>
<div class="a td num" style="left:1555px;top:587.5px;width:111px;height:24px;line-height:24px">154,836.00</div>
<div class="a td num" style="left:1666px;top:587.5px;width:110px;height:24px;line-height:24px">0.00</div>
<div class="a td num" style="left:1776px;top:587.5px;width:110px;height:24px;line-height:24px">0.00</div>
<div class="a" style="left:26px;top:619px;width:13px;height:14px;border:1px solid #e2e2e2;border-radius:3px;background:#f7f7f7"></div>
<div class="a td st" style="left:56px;top:612.5px;width:89px;height:23px;line-height:23px">Awaiting</div>
<div class="a td" style="left:259px;top:612.5px;width:167px;height:23px;line-height:23px;letter-spacing:0.15px">Murphy&#x27;s Shoring</div>
<div class="a td lk" style="left:426px;top:612.5px;width:84px;height:23px;line-height:23px;text-align:center">1021-009</div>
<div class="a td lk" style="left:510px;top:612.5px;width:113px;height:23px;line-height:23px;text-align:center;color:#3a76b0">View (0)</div>
<div class="a td" style="left:623px;top:612.5px;width:73px;height:23px;line-height:23px;text-align:center">ACH</div>
<div class="a td num" style="left:696px;top:612.5px;width:110px;height:23px;line-height:23px">908,483.00</div>
<div class="a td num" style="left:806px;top:612.5px;width:110px;height:23px;line-height:23px">580,338.94</div>
<div class="a td num" style="left:916px;top:612.5px;width:111px;height:23px;line-height:23px">0.00</div>
<div class="a td num" style="left:1027px;top:612.5px;width:110px;height:23px;line-height:23px">0.00</div>
<div class="a td num" style="left:1137px;top:612.5px;width:110px;height:23px;line-height:23px">580,338.94</div>
<div class="a td num" style="left:1247px;top:612.5px;width:43px;height:23px;line-height:23px">63.88</div>
<div class="a td num" style="left:1290px;top:612.5px;width:110px;height:23px;line-height:23px">328,144.06</div>
<div class="a td num" style="left:1400px;top:612.5px;width:111px;height:23px;line-height:23px">0.00</div>
<div class="a td num" style="left:1511px;top:612.5px;width:44px;height:23px;line-height:23px">0.00</div>
<div class="a td num" style="left:1555px;top:612.5px;width:111px;height:23px;line-height:23px">58,033.90</div>
<div class="a td num" style="left:1666px;top:612.5px;width:110px;height:23px;line-height:23px">0.00</div>
<div class="a td num" style="left:1776px;top:612.5px;width:110px;height:23px;line-height:23px">0.00</div>
<div class="a" style="left:26px;top:644px;width:13px;height:14px;border:1px solid #e2e2e2;border-radius:3px;background:#f7f7f7"></div>
<div class="a td st" style="left:56px;top:637.5px;width:89px;height:23px;line-height:23px">Awaiting</div>
<div class="a td" style="left:259px;top:637.5px;width:167px;height:23px;line-height:23px;letter-spacing:0.15px">Nelson Brothers Concrete</div>
<div class="a td lk" style="left:426px;top:637.5px;width:84px;height:23px;line-height:23px;text-align:center">1021-005</div>
<div class="a td lk" style="left:510px;top:637.5px;width:113px;height:23px;line-height:23px;text-align:center;color:#3a76b0">View (0)</div>
<div class="a td" style="left:623px;top:637.5px;width:73px;height:23px;line-height:23px;text-align:center">ACH</div>
<div class="a td num" style="left:696px;top:637.5px;width:110px;height:23px;line-height:23px">1,398,000.00</div>
<div class="a td num" style="left:806px;top:637.5px;width:110px;height:23px;line-height:23px">479,180.00</div>
<div class="a td num" style="left:916px;top:637.5px;width:111px;height:23px;line-height:23px">0.00</div>
<div class="a td num" style="left:1027px;top:637.5px;width:110px;height:23px;line-height:23px">0.00</div>
<div class="a td num" style="left:1137px;top:637.5px;width:110px;height:23px;line-height:23px">479,180.00</div>
<div class="a td num" style="left:1247px;top:637.5px;width:43px;height:23px;line-height:23px">34.28</div>
<div class="a td num" style="left:1290px;top:637.5px;width:110px;height:23px;line-height:23px">918,820.00</div>
<div class="a td num" style="left:1400px;top:637.5px;width:111px;height:23px;line-height:23px">0.00</div>
<div class="a td num" style="left:1511px;top:637.5px;width:44px;height:23px;line-height:23px">0.00</div>
<div class="a td num" style="left:1555px;top:637.5px;width:111px;height:23px;line-height:23px">47,918.00</div>
<div class="a td num" style="left:1666px;top:637.5px;width:110px;height:23px;line-height:23px">0.00</div>
<div class="a td num" style="left:1776px;top:637.5px;width:110px;height:23px;line-height:23px">0.00</div>
<div class="a" style="left:26px;top:668px;width:13px;height:14px;border:1px solid #e2e2e2;border-radius:3px;background:#f7f7f7"></div>
<div class="a td st" style="left:56px;top:661.5px;width:89px;height:24px;line-height:24px">Awaiting</div>
<div class="a td" style="left:259px;top:661.5px;width:167px;height:24px;line-height:24px;letter-spacing:0.15px">North Pole HVAC</div>
<div class="a td lk" style="left:426px;top:661.5px;width:84px;height:24px;line-height:24px;text-align:center">1021-010</div>
<div class="a td lk" style="left:510px;top:661.5px;width:113px;height:24px;line-height:24px;text-align:center;color:#3a76b0">View (0)</div>
<div class="a td" style="left:623px;top:661.5px;width:73px;height:24px;line-height:24px;text-align:center">ACH</div>
<div class="a td num" style="left:696px;top:661.5px;width:110px;height:24px;line-height:24px">3,119,545.00</div>
<div class="a td num" style="left:806px;top:661.5px;width:110px;height:24px;line-height:24px">142,852.26</div>
<div class="a td num" style="left:916px;top:661.5px;width:111px;height:24px;line-height:24px">0.00</div>
<div class="a td num" style="left:1027px;top:661.5px;width:110px;height:24px;line-height:24px">0.00</div>
<div class="a td num" style="left:1137px;top:661.5px;width:110px;height:24px;line-height:24px">142,852.26</div>
<div class="a td num" style="left:1247px;top:661.5px;width:43px;height:24px;line-height:24px">4.58</div>
<div class="a td num" style="left:1290px;top:661.5px;width:110px;height:24px;line-height:24px">2,976,692.74</div>
<div class="a td num" style="left:1400px;top:661.5px;width:111px;height:24px;line-height:24px">0.00</div>
<div class="a td num" style="left:1511px;top:661.5px;width:44px;height:24px;line-height:24px">0.00</div>
<div class="a td num" style="left:1555px;top:661.5px;width:111px;height:24px;line-height:24px">14,285.23</div>
<div class="a td num" style="left:1666px;top:661.5px;width:110px;height:24px;line-height:24px">0.00</div>
<div class="a td num" style="left:1776px;top:661.5px;width:110px;height:24px;line-height:24px">0.00</div>
<div class="a" style="left:26px;top:693px;width:13px;height:14px;border:1px solid #e2e2e2;border-radius:3px;background:#f7f7f7"></div>
<div class="a td st" style="left:56px;top:686.5px;width:89px;height:24px;line-height:24px">Awaiting</div>
<div class="a td" style="left:259px;top:686.5px;width:167px;height:24px;line-height:24px;letter-spacing:0.15px">Pratt Contracting</div>
<div class="a td lk" style="left:426px;top:686.5px;width:84px;height:24px;line-height:24px;text-align:center">1021-007</div>
<div class="a td lk" style="left:510px;top:686.5px;width:113px;height:24px;line-height:24px;text-align:center;color:#3a76b0">View (0)</div>
<div class="a td" style="left:623px;top:686.5px;width:73px;height:24px;line-height:24px;text-align:center">ACH</div>
<div class="a td num" style="left:696px;top:686.5px;width:110px;height:24px;line-height:24px">648,000.00</div>
<div class="a td num" style="left:806px;top:686.5px;width:110px;height:24px;line-height:24px">226,800.00</div>
<div class="a td num" style="left:916px;top:686.5px;width:111px;height:24px;line-height:24px">0.00</div>
<div class="a td num" style="left:1027px;top:686.5px;width:110px;height:24px;line-height:24px">0.00</div>
<div class="a td num" style="left:1137px;top:686.5px;width:110px;height:24px;line-height:24px">226,800.00</div>
<div class="a td num" style="left:1247px;top:686.5px;width:43px;height:24px;line-height:24px">35.00</div>
<div class="a td num" style="left:1290px;top:686.5px;width:110px;height:24px;line-height:24px">421,200.00</div>
<div class="a td num" style="left:1400px;top:686.5px;width:111px;height:24px;line-height:24px">0.00</div>
<div class="a td num" style="left:1511px;top:686.5px;width:44px;height:24px;line-height:24px">0.00</div>
<div class="a td num" style="left:1555px;top:686.5px;width:111px;height:24px;line-height:24px">22,680.00</div>
<div class="a td num" style="left:1666px;top:686.5px;width:110px;height:24px;line-height:24px">0.00</div>
<div class="a td num" style="left:1776px;top:686.5px;width:110px;height:24px;line-height:24px">0.00</div>
<div class="a" style="left:26px;top:718px;width:13px;height:14px;border:1px solid #e2e2e2;border-radius:3px;background:#f7f7f7"></div>
<div class="a td st" style="left:56px;top:711.5px;width:89px;height:23px;line-height:23px">Awaiting</div>
<div class="a td" style="left:259px;top:711.5px;width:167px;height:23px;line-height:23px;letter-spacing:0.15px">Wayne&#x27;s Plumbing</div>
<div class="a td lk" style="left:426px;top:711.5px;width:84px;height:23px;line-height:23px;text-align:center">1021-012</div>
<div class="a td lk" style="left:510px;top:711.5px;width:113px;height:23px;line-height:23px;text-align:center;color:#3a76b0">View (0)</div>
<div class="a td" style="left:623px;top:711.5px;width:73px;height:23px;line-height:23px;text-align:center">ACH</div>
<div class="a td num" style="left:696px;top:711.5px;width:110px;height:23px;line-height:23px">1,419,000.00</div>
<div class="a td num" style="left:806px;top:711.5px;width:110px;height:23px;line-height:23px">28,096.20</div>
<div class="a td num" style="left:916px;top:711.5px;width:111px;height:23px;line-height:23px">0.00</div>
<div class="a td num" style="left:1027px;top:711.5px;width:110px;height:23px;line-height:23px">0.00</div>
<div class="a td num" style="left:1137px;top:711.5px;width:110px;height:23px;line-height:23px">28,096.20</div>
<div class="a td num" style="left:1247px;top:711.5px;width:43px;height:23px;line-height:23px">1.98</div>
<div class="a td num" style="left:1290px;top:711.5px;width:110px;height:23px;line-height:23px">1,390,903.80</div>
<div class="a td num" style="left:1400px;top:711.5px;width:111px;height:23px;line-height:23px">0.00</div>
<div class="a td num" style="left:1511px;top:711.5px;width:44px;height:23px;line-height:23px">0.00</div>
<div class="a td num" style="left:1555px;top:711.5px;width:111px;height:23px;line-height:23px">2,809.62</div>
<div class="a td num" style="left:1666px;top:711.5px;width:110px;height:23px;line-height:23px">0.00</div>
<div class="a td num" style="left:1776px;top:711.5px;width:110px;height:23px;line-height:23px">0.00</div>
<div class="a" style="left:26px;top:743px;width:13px;height:14px;border:1px solid #e2e2e2;border-radius:3px;background:#f7f7f7"></div>
<div class="a td st" style="left:56px;top:736.5px;width:89px;height:23px;line-height:23px">Awaiting</div>
<div class="a td" style="left:259px;top:736.5px;width:167px;height:23px;line-height:23px;letter-spacing:0.15px">Wilson Utilities</div>
<div class="a td lk" style="left:426px;top:736.5px;width:84px;height:23px;line-height:23px;text-align:center">1021-003</div>
<div class="a td lk" style="left:510px;top:736.5px;width:113px;height:23px;line-height:23px;text-align:center;color:#3a76b0">View (0)</div>
<div class="a td" style="left:623px;top:736.5px;width:73px;height:23px;line-height:23px;text-align:center">ACH</div>
<div class="a td num" style="left:696px;top:736.5px;width:110px;height:23px;line-height:23px">4,076,966.00</div>
<div class="a td num" style="left:806px;top:736.5px;width:110px;height:23px;line-height:23px">1,863,941.22</div>
<div class="a td num" style="left:916px;top:736.5px;width:111px;height:23px;line-height:23px">0.00</div>
<div class="a td num" style="left:1027px;top:736.5px;width:110px;height:23px;line-height:23px">0.00</div>
<div class="a td num" style="left:1137px;top:736.5px;width:110px;height:23px;line-height:23px">1,863,941.22</div>
<div class="a td num" style="left:1247px;top:736.5px;width:43px;height:23px;line-height:23px">45.72</div>
<div class="a td num" style="left:1290px;top:736.5px;width:110px;height:23px;line-height:23px">2,213,024.78</div>
<div class="a td num" style="left:1400px;top:736.5px;width:111px;height:23px;line-height:23px">0.00</div>
<div class="a td num" style="left:1511px;top:736.5px;width:44px;height:23px;line-height:23px">0.00</div>
<div class="a td num" style="left:1555px;top:736.5px;width:111px;height:23px;line-height:23px">186,394.13</div>
<div class="a td num" style="left:1666px;top:736.5px;width:110px;height:23px;line-height:23px">0.00</div>
<div class="a td num" style="left:1776px;top:736.5px;width:110px;height:23px;line-height:23px">0.00</div>
<div class="a tot" style="left:600px;top:792px;width:93px;line-height:14px">Totals:</div>
<div class="a tot" style="left:600px;top:810px;width:93px;line-height:14px">Approved<br>Totals:</div>
<div class="a tot" style="left:696px;top:792px;width:107px;line-height:14px">21,978,275.00</div>
<div class="a tot" style="left:806px;top:792px;width:107px;line-height:14px">6,930,667.16</div>
<div class="a tot" style="left:916px;top:792px;width:108px;line-height:14px">45,000.00</div>
<div class="a tot" style="left:1027px;top:792px;width:107px;line-height:14px">0.00</div>
<div class="a tot" style="left:1137px;top:792px;width:107px;line-height:14px">6,975,667.16</div>
<div class="a tot" style="left:1247px;top:792px;width:40px;line-height:14px">31.74</div>
<div class="a tot" style="left:1290px;top:792px;width:107px;line-height:14px">15,002,607.84</div>
<div class="a tot" style="left:1400px;top:792px;width:108px;line-height:14px">4,500.00</div>
<div class="a tot" style="left:1511px;top:792px;width:41px;line-height:14px">10.00</div>
<div class="a tot" style="left:1555px;top:792px;width:108px;line-height:14px">693,066.75</div>
<div class="a tot" style="left:1666px;top:792px;width:107px;line-height:14px">0.00</div>
<div class="a tot" style="left:1776px;top:792px;width:107px;line-height:14px">40,500.00</div>
<div class="a tot" style="left:696px;top:817px;width:107px;line-height:14px">0.00</div>
<div class="a tot" style="left:806px;top:817px;width:107px;line-height:14px">0.00</div>
<div class="a tot" style="left:916px;top:817px;width:108px;line-height:14px">0.00</div>
<div class="a tot" style="left:1027px;top:817px;width:107px;line-height:14px">0.00</div>
<div class="a tot" style="left:1137px;top:817px;width:107px;line-height:14px">0.00</div>
<div class="a tot" style="left:1247px;top:817px;width:40px;line-height:14px">100.00</div>
<div class="a tot" style="left:1290px;top:817px;width:107px;line-height:14px">0.00</div>
<div class="a tot" style="left:1400px;top:817px;width:108px;line-height:14px">0.00</div>
<div class="a tot" style="left:1511px;top:817px;width:41px;line-height:14px">100.00</div>
<div class="a tot" style="left:1555px;top:817px;width:108px;line-height:14px">0.00</div>
<div class="a tot" style="left:1666px;top:817px;width:107px;line-height:14px">0.00</div>
<div class="a tot" style="left:1776px;top:817px;width:107px;line-height:14px">0.00</div>
<div style="position:absolute;left:0px;top:1059px;width:1920px;height:21px;background:#f1f1f1"></div>
<div style="position:absolute;left:21px;top:1061px;width:1577px;height:17px;background:#c1c1c1"></div>
<svg class="a" style="left:7px;top:1064px" width="8" height="11"><path d="M6 1 L1.5 5.5 L6 10 Z" fill="#a3a3a3"/></svg>
<svg class="a" style="left:1905px;top:1064px" width="8" height="10"><path d="M2 1 L6 5 L2 9 Z" fill="#505050"/></svg>
</body></html>
